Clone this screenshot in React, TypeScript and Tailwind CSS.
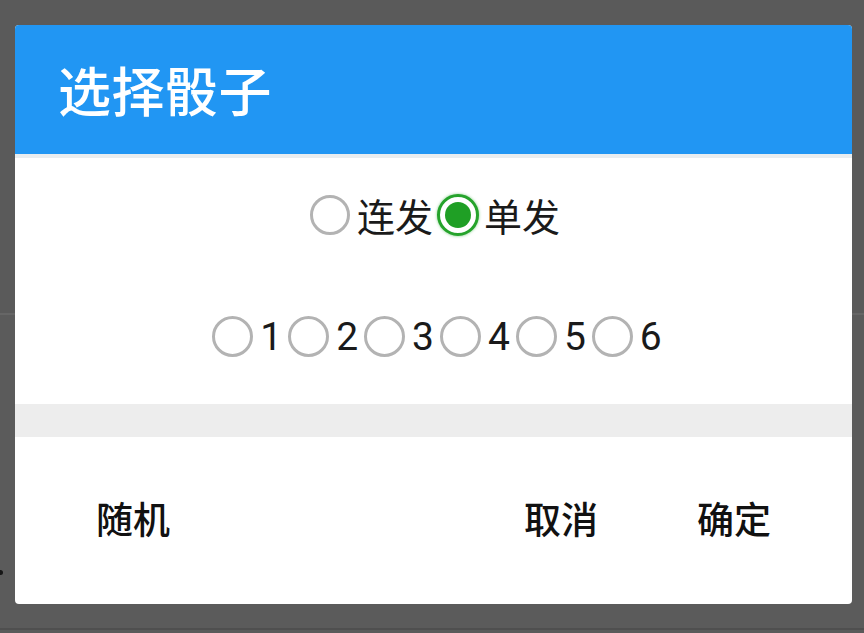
import React from "react";

const cjk = { fontFamily: '"Noto Sans CJK SC", "Noto Sans", sans-serif' };
const digitFont = { fontFamily: 'Roboto, "Noto Sans", sans-serif' };

function Unchecked({ size }: { size: number }) {
  return (
    <span
      className={
        size === 40
          ? "block w-[40px] h-[40px] rounded-full border-[3px] border-[#b3b3b3] bg-white shrink-0"
          : "block w-[41px] h-[41px] rounded-full border-[3px] border-[#b3b3b3] bg-white shrink-0"
      }
    />
  );
}

function Checked() {
  return (
    <span className="flex items-center justify-center w-[42px] h-[42px] rounded-full border-[3px] border-[#25a32b] bg-white shrink-0 shadow-[0_0_3px_rgba(40,170,50,0.6)]">
      <span className="block w-[26px] h-[26px] rounded-full bg-[#1f9f25]" />
    </span>
  );
}

export default function App() {
  const nums = ["1", "2", "3", "4", "5", "6"];
  return (
    <div className="relative w-[864px] h-[633px] overflow-hidden bg-[#5a5a5a]">
      {/* background page behind the dim */}
      <div className="flex flex-col w-full h-full">
        <div className="h-[313px] bg-[#5a5a5a]" />
        <div className="h-[2px] bg-[#666666]" />
        <div className="h-[313px] bg-[#5b5b5b]" />
        <div className="h-[2px] bg-[#4f4f4f]" />
        <div className="flex-1 bg-[#5a5a5a]" />
      </div>
      <span className="absolute left-0 top-[570px] block w-[3px] h-[5px] rounded-r-full bg-[#161616]" />

      {/* dialog */}
      <div
        className="absolute left-[15px] top-[25px] w-[837px] h-[579px] rounded-[4px] bg-white overflow-hidden flex flex-col"
        style={cjk}
      >
        <div className="h-[129px] bg-[#2196f3] flex items-center pl-[43px] shrink-0">
          <span className="text-white text-[53px] leading-none font-medium tracking-[0.5px]">选择骰子</span>
        </div>
        <div className="h-[4px] bg-[#e9edf0] shrink-0" />

        <div className="h-[246px] flex flex-col items-center pt-[37px] shrink-0">
          <div className="flex items-center h-[40px] pl-[3px]">
            <Unchecked size={40} />
            <span className="ml-[7px] text-[38px] leading-none text-[#1a1a1a]">连发</span>
            <span className="ml-[4px]">
              <Checked />
            </span>
            <span className="ml-[5px] text-[38px] leading-none text-[#1a1a1a]">单发</span>
          </div>
          <div className="flex items-center gap-[6px] mt-[80px] pl-[7px]">
            {nums.map((n) => (
              <div key={n} className="flex items-center">
                <Unchecked size={41} />
                <span className="ml-[7px] text-[39px] leading-none text-[#1a1a1a] pt-[3px]" style={digitFont}>
                  {n}
                </span>
              </div>
            ))}
          </div>
        </div>

        <div className="h-[33px] bg-[#ededed] shrink-0" />

        <div className="flex-1 flex items-center justify-between pl-[81px] pr-[81px] pb-[4px]">
          <span className="text-[37px] leading-none font-medium text-[#111]">随机</span>
          <div className="flex items-center gap-[99px]">
            <span className="text-[37px] leading-none font-medium text-[#111]">取消</span>
            <span className="text-[37px] leading-none font-medium text-[#111]">确定</span>
          </div>
        </div>
      </div>
    </div>
  );
}
